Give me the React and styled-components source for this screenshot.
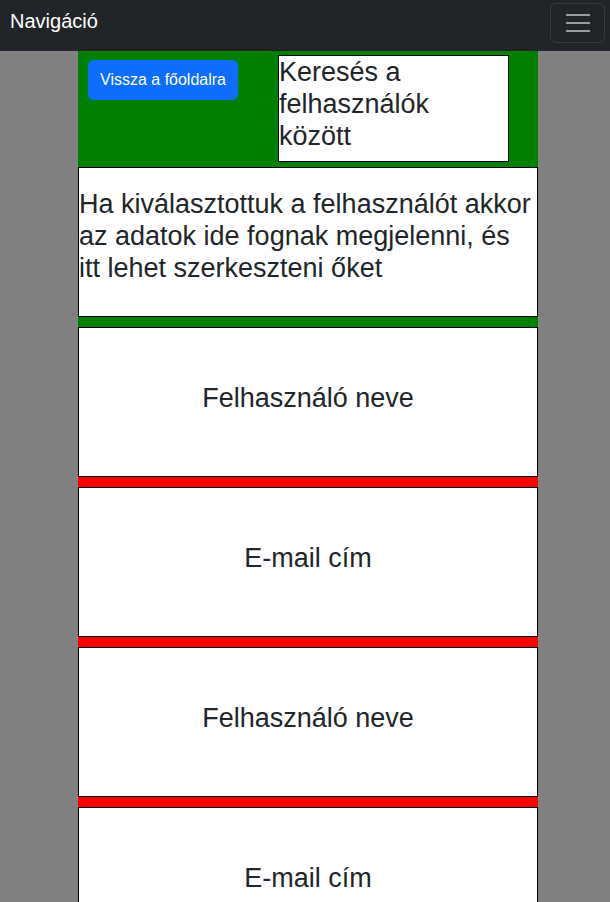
import React from "react";
import styled, { createGlobalStyle } from "styled-components";

const GlobalStyle = createGlobalStyle`
  * { box-sizing: border-box; }
  body {
    margin: 0;
    background: #808080;
    font-family: "Liberation Sans", Arial, sans-serif;
    color: #212529;
  }
`;

const NavBar = styled.nav`
  height: 51px;
  background: #212529;
  display: flex;
  align-items: flex-start;
  padding: 3px 5px 0 10px;
`;

const Brand = styled.a`
  margin-top: 3px;
  font-size: 20px;
  line-height: 30px;
  color: #fff;
  text-decoration: none;
`;

const Toggler = styled.button`
  margin-left: auto;
  width: 55px;
  height: 40px;
  background: transparent;
  border: 1px solid rgba(255, 255, 255, 0.1);
  border-radius: 6px;
  display: flex;
  align-items: center;
  justify-content: center;
  padding: 0;
`;

const Page = styled.main`
  margin-left: 78px;
  width: 460px;
  background: #008000;
`;

const Header = styled.header`
  height: 116px;
  display: flex;
  align-items: flex-start;
`;

const BackButton = styled.button`
  margin: 9px 0 0 10px;
  width: 150px;
  height: 40px;
  background: #0d6efd;
  color: #fff;
  border: none;
  border-radius: 6px;
  font-family: "Liberation Sans", Arial, sans-serif;
  font-size: 16px;
  padding: 0;
`;

const SearchBox = styled.div`
  margin: 4px 0 0 40px;
  width: 231px;
  height: 107px;
  background: #fff;
  border: 1px solid #000;
  padding-right: 8px;
`;

const Heading = styled.h2`
  margin: 0;
  font-weight: 400;
  font-size: 27px;
  line-height: 32px;
  text-align: ${(p) => (p.$center ? "center" : "left")};
`;

const InfoBox = styled.section`
  height: 150px;
  background: #fff;
  border: 1px solid #000;
  padding-top: 20px;
  margin-bottom: 10px;
`;

const UserList = styled.section`
  background: #ff0000;
`;

const UserBox = styled.div`
  height: 150px;
  background: #fff;
  border: 1px solid #000;
  padding-top: 54px;
  margin-bottom: 10px;
`;

const rows = ["Felhasználó neve", "E-mail cím", "Felhasználó neve", "E-mail cím"];

export default function App() {
  return (
    <>
      <GlobalStyle />
      <NavBar>
        <Brand href="#">Navigáció</Brand>
        <Toggler aria-label="menu">
          <svg width="24" height="18" viewBox="0 0 24 18">
            <path
              d="M0 1h24M0 9h24M0 17h24"
              stroke="rgba(255,255,255,0.55)"
              strokeWidth="2"
              fill="none"
            />
          </svg>
        </Toggler>
      </NavBar>
      <Page>
        <Header>
          <BackButton>Vissza a főoldalra</BackButton>
          <SearchBox>
            <Heading>Keresés a felhasználók között</Heading>
          </SearchBox>
        </Header>
        <InfoBox>
          <Heading>
            Ha kiválasztottuk a felhasználót akkor az adatok ide fognak
            megjelenni, és itt lehet szerkeszteni őket
          </Heading>
        </InfoBox>
        <UserList>
          {rows.map((r, i) => (
            <UserBox key={i}>
              <Heading $center>{r}</Heading>
            </UserBox>
          ))}
        </UserList>
      </Page>
    </>
  );
}
